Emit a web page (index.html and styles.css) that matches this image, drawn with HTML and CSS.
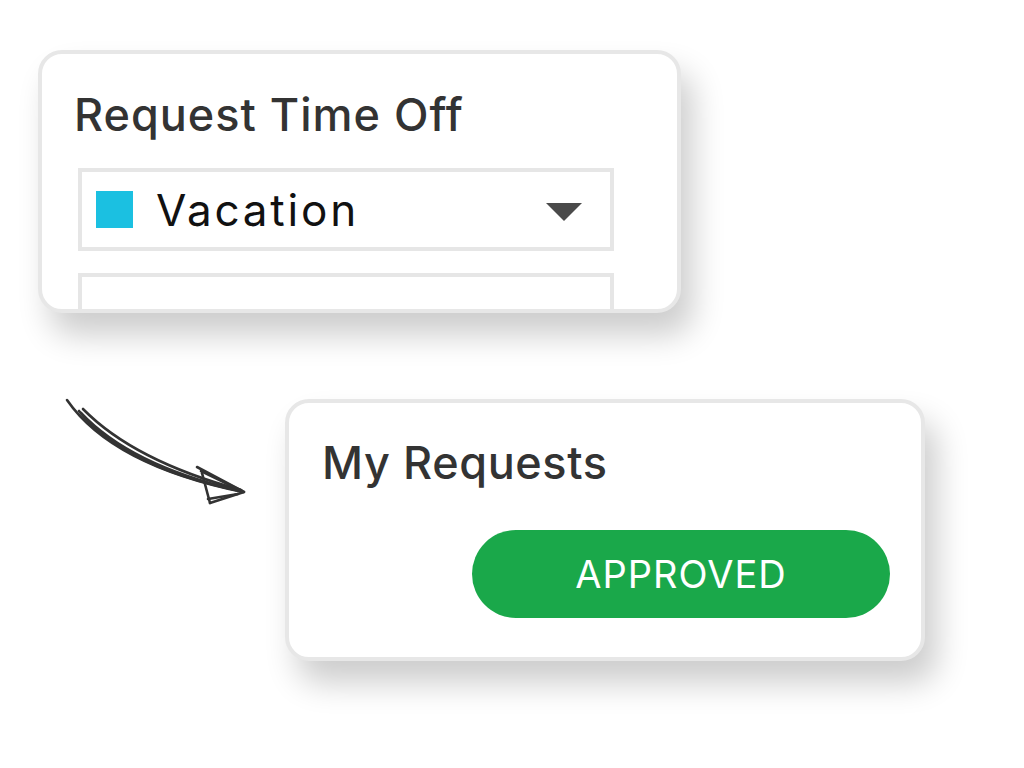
FILE: index.html
```html
<!DOCTYPE html>
<html lang="en">
<head>
<meta charset="utf-8">
<title>Time Off</title>
<link rel="stylesheet" href="styles.css">
</head>
<body>
<main class="scene">
  <section class="card card-request">
    <h2 class="card-title">Request Time Off</h2>
    <div class="select">
      <span class="swatch"></span>
      <span class="select-label">Vacation</span>
      <span class="caret"></span>
    </div>
    <div class="field"></div>
  </section>
  <div class="row">
    <svg class="arrow" width="190" height="120" viewBox="0 0 190 120" aria-hidden="true">
      <g fill="none" stroke="#333333" stroke-width="2.6" stroke-linecap="round" stroke-linejoin="round">
        <path d="M7 5 Q52 70 183 97"/>
        <path d="M19 16 Q64 72 180 96"/>
        <path d="M23 14 Q74 66 181 95"/>
        <path d="M21 18 Q70 70 176 95"/>
        <path d="M137 72 L184 97"/>
        <path d="M141 76 L182 96"/>
        <path d="M150 108 L184 97"/>
        <path d="M142 78 L150 108"/>
        <path d="M148 104 L178 99"/>
      </g>
    </svg>
    <section class="card card-status">
      <h2 class="card-title">My Requests</h2>
      <div class="status-row">
        <span class="badge">APPROVED</span>
      </div>
    </section>
  </div>
</main>
</body>
</html>
```
FILE: styles.css
```css
* { box-sizing: border-box; }

html, body {
  margin: 0;
  padding: 0;
  background: #ffffff;
}

body {
  font-family: Inter, "Noto Sans", sans-serif;
  width: 1024px;
  height: 768px;
  overflow: hidden;
}

.scene {
  display: flex;
  flex-direction: column;
  padding: 50px 0 0 38px;
}

.card {
  background: #ffffff;
  border: 4px solid #e7e7e7;
  border-radius: 24px;
  box-shadow: 12px 22px 32px rgba(0, 0, 0, 0.2);
  overflow: hidden;
}

.card-title {
  margin: 0;
  font-size: 45px;
  line-height: 1;
  font-weight: 500;
  color: #333333;
  letter-spacing: 1px;
}

.card-request {
  width: 643px;
  height: 263px;
  padding: 38px 0 0 36px;
}

.card-request .card-title {
  margin-left: -4px;
}

.select {
  margin-top: 31px;
  width: 536px;
  height: 83px;
  border: 4px solid #e6e6e6;
  display: flex;
  align-items: center;
  padding: 0 28px 0 14px;
}

.swatch {
  width: 37px;
  height: 37px;
  background: #1bc0e1;
  flex: none;
}

.select-label {
  margin-left: 23px;
  font-size: 44px;
  color: #111111;
  flex: 1;
  line-height: 1;
  letter-spacing: 2.8px;
}

.caret {
  width: 0;
  height: 0;
  border-left: 18.5px solid transparent;
  border-right: 18.5px solid transparent;
  border-top: 18px solid #4a4a4a;
  margin-top: 4px;
}

.field {
  margin-top: 22px;
  width: 536px;
  height: 60px;
  border: 4px solid #e6e6e6;
}

.row {
  display: flex;
  align-items: flex-start;
  margin-top: 82px;
  margin-left: 22px;
}

.arrow {
  flex: none;
}

.card-status {
  margin-left: 35px;
  margin-top: 4px;
  width: 640px;
  height: 262px;
  padding: 37px 31px 0 33px;
  display: flex;
  flex-direction: column;
}

.card-status .card-title {
  letter-spacing: 0.6px;
}

.status-row {
  display: flex;
  justify-content: flex-end;
  margin-top: 45px;
}

.badge {
  width: 418px;
  height: 88px;
  border-radius: 44px;
  background: #1aa84a;
  color: #ffffff;
  font-size: 38px;
  font-weight: 400;
  display: flex;
  align-items: center;
  justify-content: center;
  letter-spacing: 1px;
}
```
